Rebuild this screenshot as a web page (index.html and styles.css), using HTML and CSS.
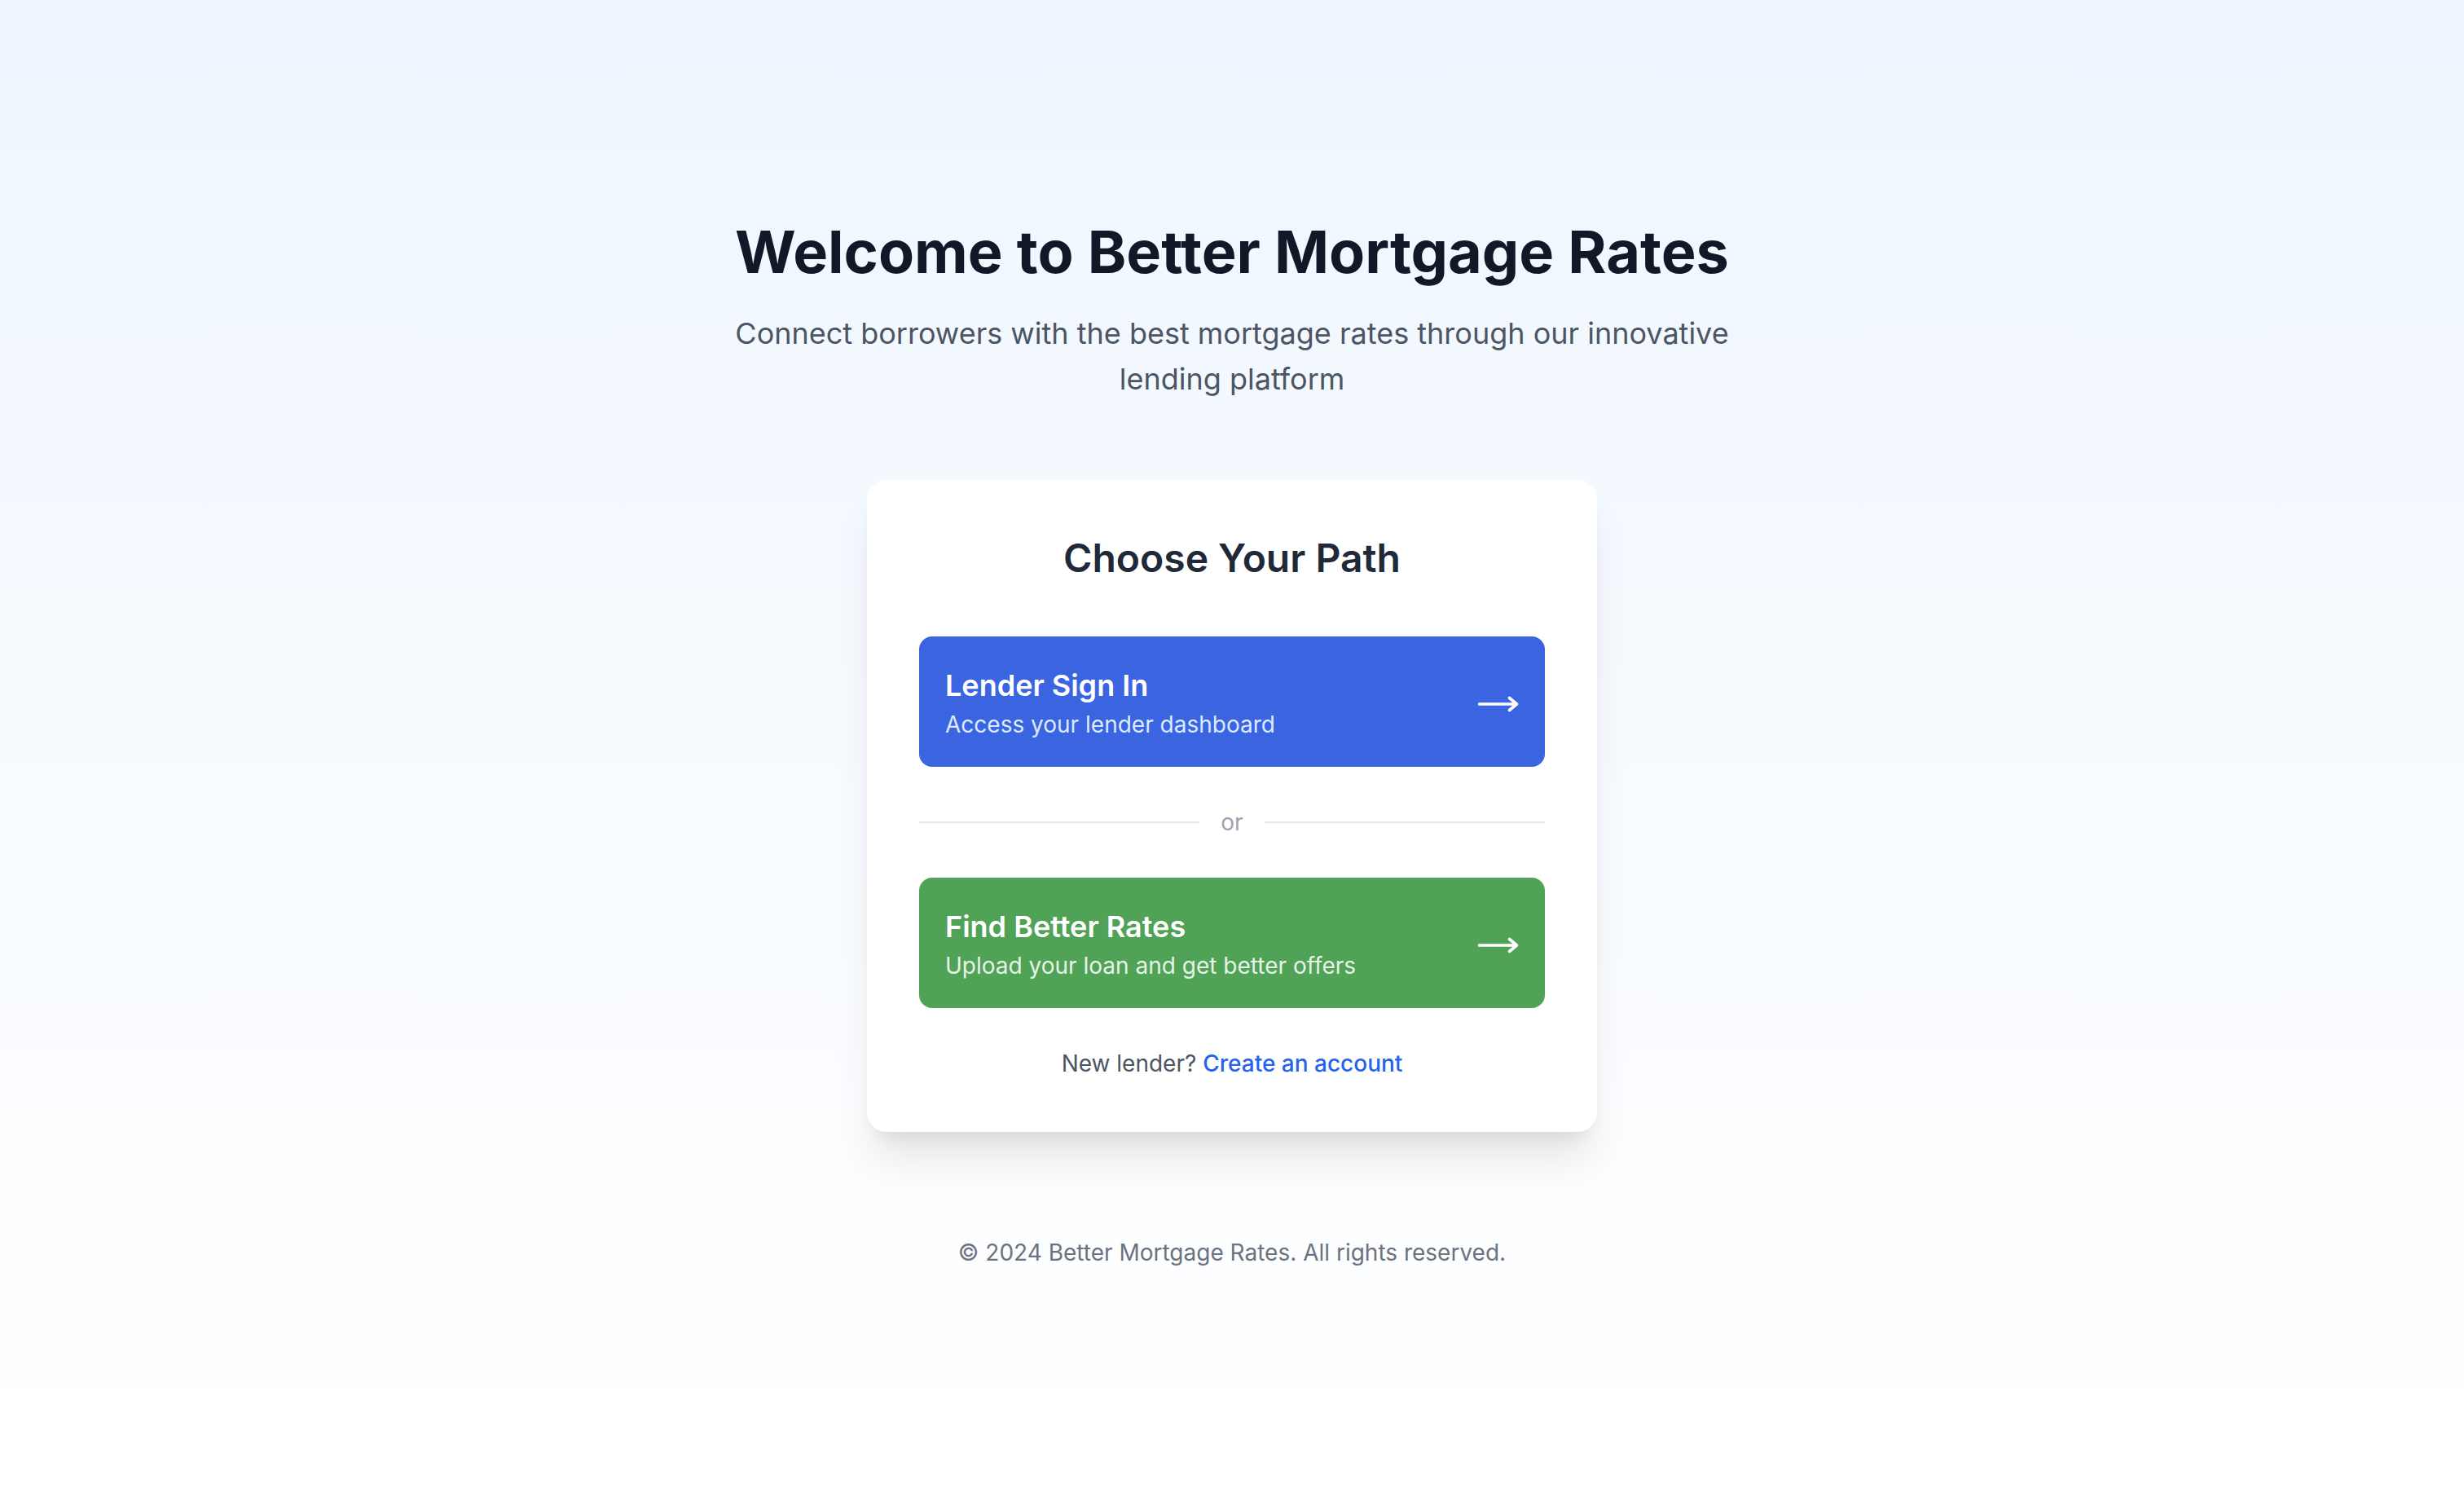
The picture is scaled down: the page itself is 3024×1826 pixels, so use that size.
FILE: index.html
```html
<!DOCTYPE html>
<html lang="en">
<head>
<meta charset="utf-8">
<title>Better Mortgage Rates</title>
<link rel="stylesheet" href="styles.css">
</head>
<body>
<main class="page">
  <header class="hero">
    <h1 class="hero-title">Welcome to Better Mortgage Rates</h1>
    <p class="hero-sub">Connect borrowers with the best mortgage rates through our innovative lending platform</p>
  </header>

  <section class="card">
    <h2 class="card-title">Choose Your Path</h2>

    <a class="path-btn path-blue" href="#">
      <span class="path-text">
        <span class="path-name">Lender Sign In</span>
        <span class="path-desc">Access your lender dashboard</span>
      </span>
      <svg class="arrow" width="50" height="20" viewBox="0 0 50 20" aria-hidden="true"><path d="M1 10H47M38.5 2.5L47.5 10L38.5 17.5" fill="none" stroke="#fff" stroke-width="3.6" stroke-linecap="round" stroke-linejoin="round"/></svg>
    </a>

    <div class="divider"><span class="divider-line"></span><span class="divider-text">or</span><span class="divider-line"></span></div>

    <a class="path-btn path-green" href="#">
      <span class="path-text">
        <span class="path-name">Find Better Rates</span>
        <span class="path-desc">Upload your loan and get better offers</span>
      </span>
      <svg class="arrow" width="50" height="20" viewBox="0 0 50 20" aria-hidden="true"><path d="M1 10H47M38.5 2.5L47.5 10L38.5 17.5" fill="none" stroke="#fff" stroke-width="3.6" stroke-linecap="round" stroke-linejoin="round"/></svg>
    </a>

    <p class="signup">New lender? <a class="signup-link" href="#">Create an account</a></p>
  </section>

  <footer class="footer">© 2024 Better Mortgage Rates. All rights reserved.</footer>
</main>
</body>
</html>
```

FILE: styles.css
```css
* { box-sizing: border-box; }
html, body { margin: 0; padding: 0; }
body {
  font-family: Inter, "Noto Sans", "Liberation Sans", sans-serif;
  background: linear-gradient(to bottom, #eff6ff 0%, #ffffff 100%);
  min-height: 100vh;
  color: #111827;
}
.page {
  min-height: 100vh;
  display: flex;
  flex-direction: column;
  align-items: center;
  justify-content: center;
  padding: 0 32px;
}
.hero {
  text-align: center;
  max-width: 1344px;
  margin-bottom: 96px;
}
.hero-title {
  margin: 0 0 32px;
  font-size: 72px;
  line-height: 80px;
  font-weight: 700;
  color: #111827;
}
.hero-sub {
  margin: 0;
  font-size: 36px;
  line-height: 56px;
  color: #4b5563;
}
.card {
  width: 896px;
  background: #fff;
  border-radius: 24px;
  padding: 64px;
  box-shadow: 0 40px 50px -10px rgba(0,0,0,0.10), 0 16px 20px -12px rgba(0,0,0,0.08);
}
.card-title {
  margin: 0 0 64px;
  text-align: center;
  font-size: 48px;
  line-height: 64px;
  font-weight: 600;
  color: #1f2937;
}
.path-btn {
  display: flex;
  align-items: center;
  justify-content: space-between;
  height: 160px;
  padding: 0 32px;
  border-radius: 16px;
  text-decoration: none;
  color: #fff;
}
.path-blue { background: #3b64e1; }
.path-green { background: #4fa256; }
.path-text { display: flex; flex-direction: column; }
.path-name {
  font-size: 36px;
  line-height: 56px;
  font-weight: 600;
}
.path-desc {
  font-size: 28px;
  line-height: 40px;
}
.path-blue .path-desc { color: #dbeafe; }
.path-green .path-desc { color: #e6f4e7; }
.arrow { display: block; margin-top: 6px; }
.divider {
  display: flex;
  align-items: center;
  margin: 48px 0;
}
.divider-line { flex: 1; height: 2px; background: #e5e7eb; }
.divider-text {
  padding: 0 26px;
  font-size: 28px;
  line-height: 40px;
  color: #9ca3af;
}
.signup {
  margin: 48px 0 0;
  text-align: center;
  font-size: 28px;
  line-height: 40px;
  color: #4b5563;
}
.signup-link {
  color: #2563eb;
  font-weight: 500;
  text-decoration: none;
}
.footer {
  margin-top: 128px;
  font-size: 28px;
  line-height: 40px;
  color: #6b7280;
}
```
